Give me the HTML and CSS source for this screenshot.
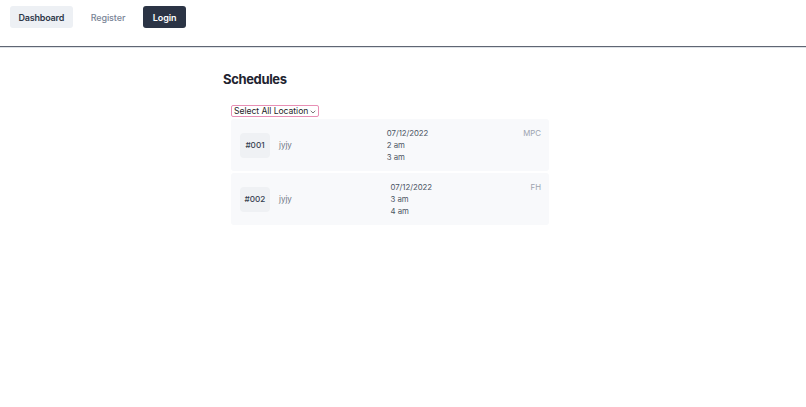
FILE: index.html
```html
<!DOCTYPE html>
<html lang="en">
<head>
<meta charset="utf-8">
<title>Schedules</title>
<link rel="stylesheet" href="styles.css">
</head>
<body>
<nav class="nav">
  <a class="nav-btn nav-btn--light" href="#">Dashboard</a>
  <a class="nav-btn nav-btn--plain" href="#">Register</a>
  <a class="nav-btn nav-btn--dark" href="#">Login</a>
</nav>
<main class="page">
  <h1 class="title">Schedules</h1>
  <div class="list">
    <div class="select">
      <span>Select All Location</span>
      <svg class="chev" width="6" height="4" viewBox="0 0 6 4"><path d="M0.7 0.8 L3 3 L5.3 0.8" fill="none" stroke="#555" stroke-width="0.8"/></svg>
    </div>
    <div class="card">
      <div class="left">
        <span class="badge">#001</span>
        <span class="name">jyjy</span>
      </div>
      <div class="times">
        <div>07/12/2022</div>
        <div>2 am</div>
        <div>3 am</div>
      </div>
      <div class="loc">MPC</div>
    </div>
    <div class="card">
      <div class="left">
        <span class="badge">#002</span>
        <span class="name">jyjy</span>
      </div>
      <div class="times">
        <div>07/12/2022</div>
        <div>3 am</div>
        <div>4 am</div>
      </div>
      <div class="loc">FH</div>
    </div>
  </div>
</main>
</body>
</html>
```

FILE: styles.css
```css
html, body {
  margin: 0;
  padding: 0;
  background: #ffffff;
  font-family: Inter, "Noto Sans", sans-serif;
  color: #1f2937;
}

.nav {
  display: flex;
  align-items: center;
  gap: 8.5px;
  padding: 6px 10px 18px;
  border-bottom: 1px solid #5f6673;
  box-shadow: 0 1px 0 #dde1e6;
}

.nav-btn {
  display: inline-flex;
  align-items: center;
  height: 22px;
  padding: 0 9.5px;
  border-radius: 3px;
  font-size: 9px;
  letter-spacing: -0.1px;
  font-weight: 600;
  text-decoration: none;
}

.nav-btn--light {
  background: #edf0f4;
  color: #2d3748;
  padding: 0 8.5px;
  letter-spacing: -0.2px;
}

.nav-btn--plain {
  color: #7a8597;
  font-weight: 500;
}

.nav-btn--dark {
  background: #2b3445;
  color: #ffffff;
}

.page {
  width: 470px;
  margin: 0 auto;
  height: 349px;
  box-shadow: 0 12px 10px -10px rgba(0, 0, 0, 0.06);
  box-sizing: border-box;
  padding-top: 23px;
}

.title {
  margin: 0 0 0 55px;
  font-size: 13px;
  letter-spacing: -0.35px;
  line-height: 18px;
  font-weight: 700;
  color: #1f2430;
}

.list {
  margin: 17px 0 0 63px;
  width: 318px;
  display: flex;
  flex-direction: column;
  align-items: flex-start;
  gap: 2px;
}

.select {
  display: inline-flex;
  align-items: center;
  gap: 2px;
  padding: 0 2px;
  border: 1px solid #e88fb5;
  border-radius: 2px;
  font-size: 8.6px;
  letter-spacing: -0.05px;
  color: #1f1f1f;
  box-sizing: border-box;
  height: 12px;
}

.chev {
  margin-top: 1px;
}

.card {
  align-self: stretch;
  display: flex;
  justify-content: space-between;
  align-items: center;
  padding: 8px 8px 8px 9px;
  background: #f8f9fb;
  border-radius: 3px;
}

.left {
  display: flex;
  align-items: center;
  gap: 9px;
}

.badge {
  display: inline-flex;
  align-items: center;
  justify-content: center;
  width: 30px;
  height: 25px;
  border-radius: 4px;
  background: #eff1f4;
  font-size: 8.2px;
  font-weight: 500;
  color: #374151;
}

.name {
  font-size: 8px;
  color: #6b7280;
}

.times {
  font-size: 7.8px;
  letter-spacing: -0.05px;
  line-height: 12px;
  color: #4b5563;
}

.loc {
  align-self: flex-start;
  font-size: 7.8px;
  line-height: 12px;
  color: #9ca3af;
}
```
